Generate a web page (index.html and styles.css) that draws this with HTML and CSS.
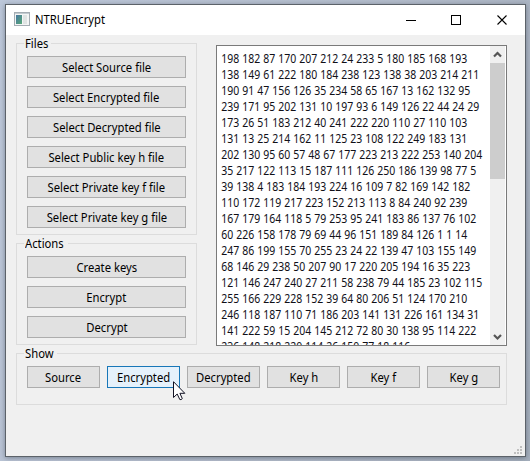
FILE: index.html
```html
<!DOCTYPE html>
<html lang="en">
<head>
<meta charset="utf-8">
<title>NTRUEncrypt</title>
<link rel="stylesheet" href="styles.css">
</head>
<body>
<div class="window">
  <header class="titlebar">
    <svg class="app-icon" width="16" height="14" viewBox="0 0 16 14">
      <defs><linearGradient id="pane" x1="0" y1="0" x2="1" y2="1"><stop offset="0" stop-color="#4878a0"/><stop offset="1" stop-color="#58a878"/></linearGradient></defs>
      <rect x=".5" y=".5" width="15" height="13" fill="#f4f5f5" stroke="#a5adb3"/>
      <path d="M1 1.5h14" stroke="#c3cbd0"/>
      <rect x="2" y="3" width="6" height="9" fill="url(#pane)"/>
      <rect x="9" y="3" width="4" height="9" fill="#e0e4e3"/>
    </svg>
    <h1 class="title"><span class="text">NTRUEncrypt</span></h1>
    <svg class="controls" width="104" height="12" viewBox="0 0 104 12" fill="none" stroke="#000" shape-rendering="crispEdges">
      <path d="M0 6.5h10M45.500 1.500h9v9h-9z"/>
      <path d="M91.500 1.500l9 9M100.500 1.500l-9 9" shape-rendering="auto" stroke-width="1.100"/>
    </svg>
  </header>
  <main class="content">
    <div class="top">
      <div class="side">
        <section class="group files">
          <h2 class="legend"><span class="text">Files</span></h2>
          <button class="btn"><span class="text">Select Source file</span></button>
          <button class="btn"><span class="text">Select Encrypted file</span></button>
          <button class="btn"><span class="text">Select Decrypted file</span></button>
          <button class="btn"><span class="text">Select Public key h file</span></button>
          <button class="btn"><span class="text">Select Private key f file</span></button>
          <button class="btn"><span class="text">Select Private key g file</span></button>
        </section>
        <section class="group actions">
          <h2 class="legend"><span class="text">Actions</span></h2>
          <button class="btn"><span class="text">Create keys</span></button>
          <button class="btn"><span class="text">Encrypt</span></button>
          <button class="btn"><span class="text">Decrypt</span></button>
        </section>
      </div>
      <div class="viewer">
        <div class="data">198 182 87 170 207 212 24 233 5 180 185 168 193
138 149 61 222 180 184 238 123 138 38 203 214 211
190 91 47 156 126 35 234 58 65 167 13 162 132 95
239 171 95 202 131 10 197 93 6 149 126 22 44 24 29
173 26 51 183 212 40 241 222 220 110 27 110 103
131 13 25 214 162 11 125 23 108 122 249 183 131
202 130 95 60 57 48 67 177 223 213 222 253 140 204
35 217 122 113 15 187 111 126 250 186 139 98 77 5
39 138 4 183 184 193 224 16 109 7 82 169 142 182
110 172 119 217 223 152 213 113 8 84 240 92 239
167 179 164 118 5 79 253 95 241 183 86 137 76 102
60 226 158 178 79 69 44 96 151 189 84 126 1 1 14
247 86 199 155 70 255 23 24 22 139 47 103 155 149
68 146 29 238 50 207 90 17 220 205 194 16 35 223
121 146 247 240 27 211 58 238 79 44 185 23 102 115
255 166 229 228 152 39 64 80 206 51 124 170 210
246 118 187 110 71 186 203 141 131 226 161 134 31
141 222 59 15 204 145 212 72 80 30 138 95 114 222
236 148 218 220 114 26 150 77 18 116</div>
        <div class="scrollbar">
          <svg class="arrow" width="15" height="17" viewBox="0 0 15 17"><path d="M4 10.500L7.500 7L11 10.500" fill="none" stroke="#555" stroke-width="2.200"/></svg>
          <div class="thumb"></div>
          <svg class="arrow" width="15" height="17" viewBox="0 0 15 17"><path d="M4 7L7.500 10.500L11 7" fill="none" stroke="#555" stroke-width="2.200"/></svg>
        </div>
      </div>
    </div>
    <section class="group show">
      <h2 class="legend"><span class="text">Show</span></h2>
      <button class="btn"><span class="text">Source</span></button>
      <button class="btn hover"><span class="text">Encrypted</span></button>
      <button class="btn"><span class="text">Decrypted</span></button>
      <button class="btn"><span class="text">Key h</span></button>
      <button class="btn"><span class="text">Key f</span></button>
      <button class="btn"><span class="text">Key g</span></button>
    </section>
  </main>
  <svg class="grip" width="8" height="8" viewBox="0 0 8 8" fill="#bfbfbf"><path d="M6 0h2v2H6zM3 3h2v2H3zM6 3h2v2H6zM0 6h2v2H0zM3 6h2v2H3zM6 6h2v2H6z"/></svg>
</div>
<svg class="cursor" width="13" height="20" viewBox="0 0 13 20"><path d="M.5 .700V16.500L4.200 13L6.800 18.500Q8 19.200 9.300 17.600L6.900 12.300H11.800Z" fill="#fff" stroke="#111122" stroke-width="1"/></svg>
</body>
</html>
```
FILE: styles.css
```css
* { box-sizing: border-box; }

body {
  margin: 0;
  width: 530px;
  height: 461px;
  padding: 4px 4px 4px 5px;
  overflow: hidden;
  background: linear-gradient(105deg, #bdc8da, #b3bccb 60%, #a5afbd);
  font-family: "Noto Sans", "Open Sans", sans-serif;
  font-size: 12.5px;
  color: #000;
}

.window {
  position: relative;
  width: 521px;
  height: 453px;
  border: 1px solid #5c6269;
  background: #f0f0f0;
  box-shadow: 0 1px 5px rgba(40, 50, 65, .45);
}

.titlebar {
  display: flex;
  align-items: center;
  height: 30px;
  padding: 0 15px 0 8px;
  background: #fff;
}

.app-icon { margin-bottom: 2px; }

.title {
  flex: 1;
  margin: 0 0 0 5px;
  font-size: 12.5px;
  font-weight: 400;
  line-height: 16px;
}

.text {
  display: inline-block;
  white-space: nowrap;
  transform: scaleX(.9);
}

.title .text, .legend .text { transform-origin: left; }

.content { padding: 8px 18px 0 10px; }

.top { display: flex; justify-content: space-between; }

.side { width: 181px; }

.group {
  position: relative;
  display: flex;
  border: 1px solid #dcdcdc;
}

.files, .actions {
  flex-direction: column;
  gap: 8px;
  padding: 12px 10px 0;
}

.files { height: 192px; }

.actions { height: 102px; margin-top: 8px; }

.legend {
  position: absolute;
  top: -8px;
  left: 7px;
  height: 16px;
  margin: 0;
  padding-left: 1px;
  background: #f0f0f0;
  font-size: 12.5px;
  font-weight: 400;
  line-height: 16px;
}

.btn {
  display: flex;
  align-items: center;
  justify-content: center;
  height: 22px;
  padding: 2px 0 0;
  border: 1px solid #adadad;
  background: #e1e1e1;
  font: inherit;
  line-height: 16px;
  color: #000;
}

.btn.hover { border-color: #1877b8; background: #e5f1fb; }

.viewer {
  display: flex;
  justify-content: space-between;
  width: 291px;
  height: 301px;
  margin-top: 2px;
  padding-right: 1px;
  border: 1px solid #7a7a7a;
  background: #fff;
  overflow: hidden;
}

.data {
  flex: none;
  width: 322px;
  height: 315px;
  margin-right: -60px;
  padding: 5px 0 0 5px;
  white-space: pre;
  line-height: 16px;
  word-spacing: .33px;
  transform: scaleX(.839);
  transform-origin: left;
  color: #101018;
}

.scrollbar {
  display: flex;
  flex-direction: column;
  width: 15px;
  background: #f0f0f0;
}

.arrow { display: block; }

.thumb { height: 116px; margin-bottom: 149px; background: #cdcdcd; }

.show {
  height: 52px;
  margin-top: 7px;
  padding: 12px 0 0 10px;
  gap: 7px;
  width: 491px;
}

.show .btn { width: 73px; }

.grip { position: absolute; right: 3px; bottom: 2px; }

.cursor { position: absolute; left: 173px; top: 381px; }
```
